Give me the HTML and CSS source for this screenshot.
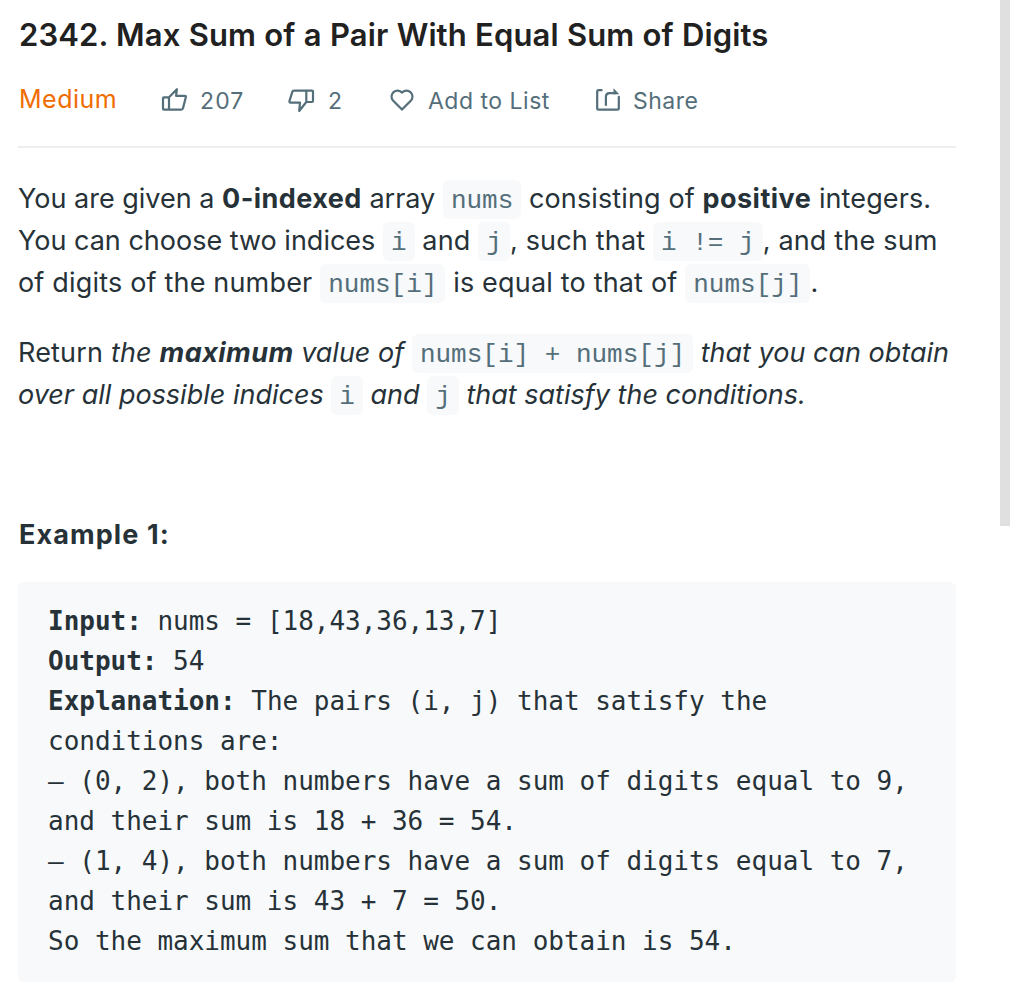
FILE: index.html
```html
<!DOCTYPE html>
<html lang="en">
<head>
<meta charset="utf-8">
<title>2342. Max Sum of a Pair With Equal Sum of Digits</title>
<link rel="stylesheet" href="styles.css">
</head>
<body>
<main class="problem">
  <header class="header">
    <h1 class="title">2342. Max Sum of a Pair With Equal Sum of Digits</h1>
    <div class="toolbar">
      <span class="difficulty">Medium</span>
      <button class="action like"><svg class="icon" viewBox="0 0 28 28"><path d="M3.9 10.3H9V22.6H3.9Q3 22.6 3 21.7V11.2Q3 10.3 3.9 10.3ZM9 10.3 16.9 2.2 16.1 8.8H24.8Q26.2 8.8 25.8 10.2L23 21.3Q22.6 22.6 21.3 22.6H9"/></svg><span>207</span></button>
      <button class="action dislike"><svg class="icon" viewBox="0 0 28 28"><path d="M19.3 3.6H25Q26 3.6 26 4.6V14Q26 15 25 15H19.3ZM19.3 3.6H7Q5.7 3.6 5.3 4.9L2.5 13.9Q2.1 15.6 3.6 15.6H13L12.2 24 19.3 15"/></svg><span>2</span></button>
      <button class="action favorite"><svg class="icon" viewBox="0 0 28 28"><path d="M14 22.6 5 13.5A5.7 5.7 0 0 1 14 5.6 5.7 5.7 0 0 1 23 13.5Z"/></svg><span>Add to List</span></button>
      <button class="action share"><svg class="icon" viewBox="0 0 28 28"><path d="M7.6 3.2H4.7Q3.2 3.2 3.2 4.6V21.2Q3.2 22.6 4.7 22.6H23.2Q24.8 22.6 24.8 21.2V9.9M11.9 18V9.8Q11.9 6.2 15.4 6.2H22"/><path class="solid" d="M19.5 1.3 25.3 7.2H19.5Z"/></svg><span>Share</span></button>
    </div>
  </header>
  <section class="description">
    <p><span class="line">You are given a <strong>0-indexed</strong> array <code>nums</code><span class="slight"> consisting of <strong>positive</strong> integers.</span></span>
    <span class="line">You can choose two indices <code>i</code><span class="loose"> and <code>j</code>, such that <code>i != j</code>, and the sum</span></span>
    <span class="line loose">of digits of the number <code>nums[i]</code> is equal to that of <code>nums[j]</code>.</span></p>
    <p><span class="line"><span class="loose">Return <em>the </em></span><em><strong>maximum</strong> value of </em><code>nums[i] + nums[j]</code><em> that you can obtain</em></span>
    <em class="line">over all possible indices <code>i</code> and <code>j</code> that satisfy the conditions.</em></p>
    <p class="example-title"><strong>Example 1:</strong></p>
    <pre class="example"><strong>Input:</strong> nums = [18,43,36,13,7]
<strong>Output:</strong> 54
<strong>Explanation:</strong> The pairs (i, j) that satisfy the conditions are:
– (0, 2), both numbers have a sum of digits equal to 9, and their sum is 18 + 36 = 54.
– (1, 4), both numbers have a sum of digits equal to 7, and their sum is 43 + 7 = 50.
So the maximum sum that we can obtain is 54.</pre>
  </section>
</main>
<div class="scrollbar"></div>
</body>
</html>
```
FILE: styles.css
```css
* { box-sizing: border-box; }

body {
  display: flex;
  justify-content: space-between;
  height: 1006px;
  margin: 0;
  overflow: hidden;
  background: #fff;
  color: #263238;
  font-family: Inter, "Noto Sans", sans-serif;
}

.problem { width: 956px; padding-left: 18px; }

.header {
  height: 148px;
  padding-top: 15px;
  border-bottom: 2px solid #eee;
}

.title {
  margin: 0;
  padding-left: 1px;
  color: #212121;
  font-size: 31px;
  font-weight: 600;
  line-height: 39px;
  letter-spacing: .1px;
  word-spacing: .4px;
  white-space: nowrap;
}

.toolbar {
  display: flex;
  align-items: center;
  height: 40px;
  margin-top: 26px;
}

.difficulty {
  width: 142px;
  padding: 0 0 3px 1px;
  color: #ef6c00;
  font-size: 25px;
  line-height: 38px;
  letter-spacing: .5px;
}

.action {
  display: flex;
  align-items: center;
  gap: 12px;
  padding: 2px 0 0;
  border: 0;
  background: none;
  color: #546e7a;
  font: 23px/36px Inter, "Noto Sans", sans-serif;
  letter-spacing: .5px;
  white-space: nowrap;
}

.like { width: 127px; letter-spacing: 1.1px; }
.dislike { width: 101px; gap: 13px; }
.favorite { width: 206px; }
.share { gap: 11px; }

.icon {
  flex: none;
  width: 28px;
  height: 28px;
  fill: none;
  stroke: currentColor;
  stroke-width: 2.2;
  stroke-linejoin: round;
  stroke-linecap: round;
}

.icon .solid { fill: currentColor; stroke: none; }

.description {
  padding-top: 30px;
  font-size: 27px;
  line-height: 42px;
}

p { margin: 0 0 28px; }

strong { letter-spacing: .45px; }

.line { display: block; white-space: nowrap; }

.slight { letter-spacing: .12px; }
.loose { letter-spacing: .18px; }

.description code {
  padding: 6px 8px 3px;
  border-radius: 6px;
  background: #f7f9fa;
  color: #546e7a;
  font: normal 26px/38px "Liberation Mono", monospace;
  letter-spacing: 0;
}

.example-title {
  margin-bottom: 26px;
  padding-top: 70px;
}

.example-title strong { padding-left: 1px; letter-spacing: 1.1px; }

.example {
  height: 400px;
  margin: 0;
  padding: 19px 30px;
  border-radius: 6px;
  background: #f7f9fb;
  font: 26px/40px "DejaVu Sans Mono", monospace;
  letter-spacing: -.02px;
  white-space: pre-wrap;
}

.example strong { letter-spacing: -.02px; }

.scrollbar { width: 10px; height: 526px; background: #e0e0e0; }
```
